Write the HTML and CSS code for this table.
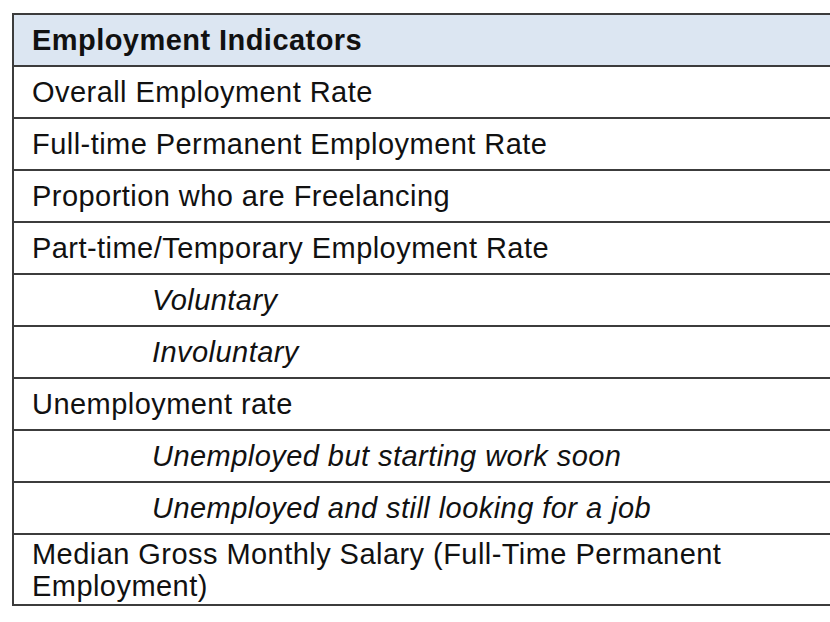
FILE: index.html
```html
<!DOCTYPE html>
<html>
<head>
<meta charset="utf-8">
<link rel="stylesheet" href="styles.css">
</head>
<body>
<div class="wrap">
<table class="ind">
  <tr class="head"><th>Employment Indicators</th></tr>
  <tr><td>Overall Employment Rate</td></tr>
  <tr><td>Full-time Permanent Employment Rate</td></tr>
  <tr><td>Proportion who are Freelancing</td></tr>
  <tr><td>Part-time/Temporary Employment Rate</td></tr>
  <tr><td class="sub">Voluntary</td></tr>
  <tr><td class="sub">Involuntary</td></tr>
  <tr><td>Unemployment rate</td></tr>
  <tr><td class="sub">Unemployed but starting work soon</td></tr>
  <tr><td class="sub">Unemployed and still looking for a job</td></tr>
  <tr class="last"><td>Median Gross Monthly Salary (Full-Time Permanent Employment)</td></tr>
</table>
</div>
</body>
</html>
```
FILE: styles.css
```css
html, body {
  margin: 0;
  padding: 0;
  background: #ffffff;
  overflow: hidden;
}
.wrap {
  padding: 13px 0 0 12px;
  width: 860px;
}
.ind {
  border-collapse: collapse;
  width: 840px;
  font-family: "Liberation Sans", Arial, sans-serif;
  font-size: 29px;
  letter-spacing: 0.45px;
  color: #111111;
}
.ind th, .ind td {
  border: 2px solid #3c3c3c;
  text-align: left;
  padding: 0 0 0 18px;
  height: 50px;
  box-sizing: border-box;
  vertical-align: middle;
  line-height: 32px;
}
.ind tr { height: 52px; }
.ind th {
  background: #dce6f2;
  font-weight: bold;
  letter-spacing: 0.45px;
}
.ind td.sub {
  font-style: italic;
  padding-left: 138px;
}
.ind tr.last td {
  padding-top: 3px;
  padding-bottom: 2px;
  height: 70px;
}
```
